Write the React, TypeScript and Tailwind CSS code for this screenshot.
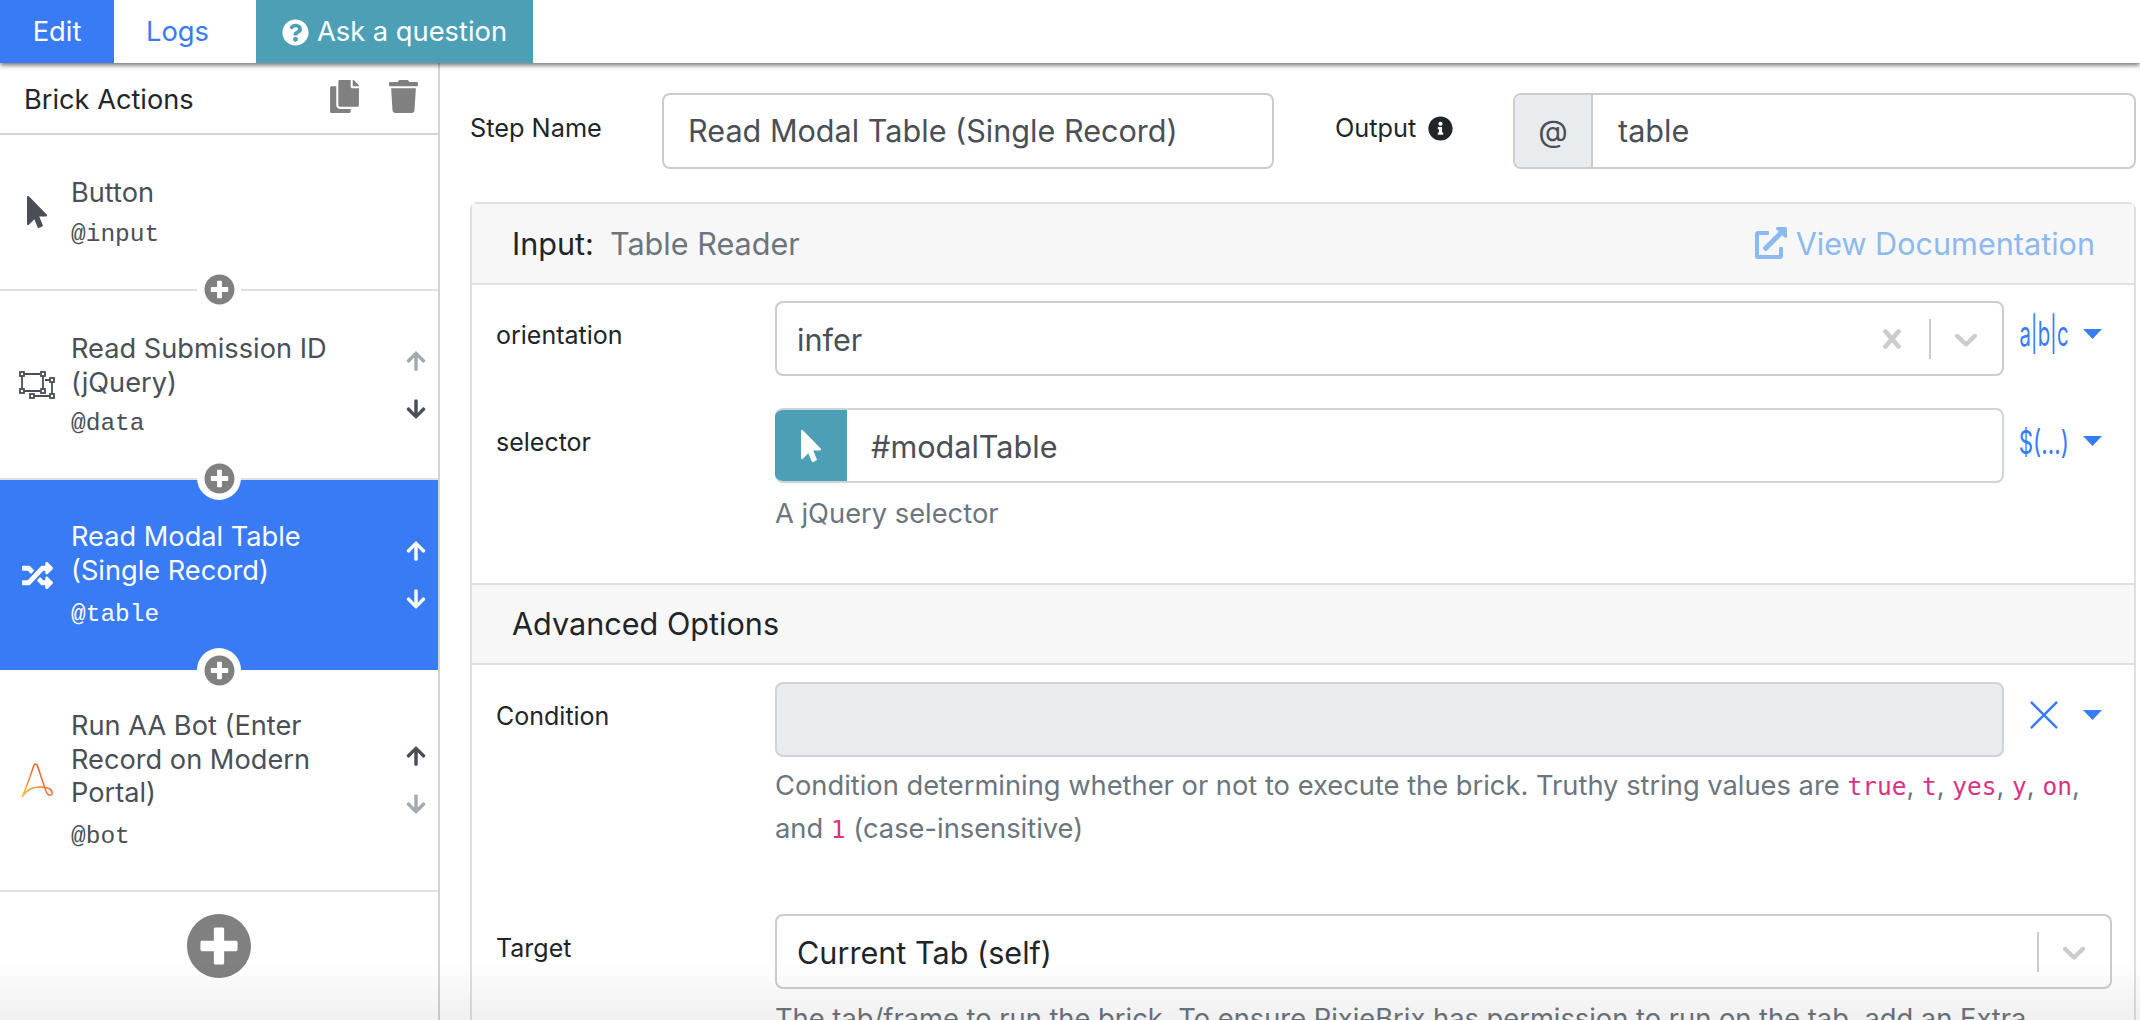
import { FaArrowDown, FaArrowUp, FaCopy, FaExternalLinkAlt, FaInfoCircle, FaMousePointer, FaPlusCircle, FaQuestionCircle, FaRandom, FaTrash } from "react-icons/fa";
import type { ReactNode } from "react";

function AutomationLogo() {
  return (
    <svg viewBox="0 0 32 35" className="h-[35px] w-[32px]" fill="none">
      <defs>
        <linearGradient id="aa" x1="0" y1="1" x2="1" y2="0">
          <stop offset="0" stopColor="#f9c23c" />
          <stop offset="0.55" stopColor="#e8743a" />
          <stop offset="1" stopColor="#dd5128" />
        </linearGradient>
      </defs>
      <path
        d="M1 34 C5 26 10 11 13 2 C13.6 0.6 15.6 0.6 16.2 2 L24.5 27 C26 32 30 34 31 30.5 C32 26 26 24 19 24 C11 24 5 27 1 34"
        stroke="url(#aa)"
        strokeWidth="1.6"
      />
    </svg>
  );
}

function UngroupIcon() {
  return (
    <svg viewBox="0 0 36 28" className="h-[28px] w-[36px]" fill="none" stroke="#4a4f57" strokeWidth="1.8">
      <path d="M5 3 H21 M3 5 V18 M5 20 H21 M24 5 V18 M15 25 H31 M33 11 V23 M26 9 H31" />
      <rect x="1" y="1" width="4" height="4" />
      <rect x="22" y="1" width="4" height="4" />
      <rect x="1" y="18" width="4" height="4" />
      <rect x="22" y="18" width="4" height="4" />
      <rect x="31" y="7" width="4" height="4" />
      <rect x="11" y="23" width="4" height="4" />
      <rect x="31" y="23" width="4" height="4" />
    </svg>
  );
}

function AddDot() {
  return (
    <div className="absolute bottom-[-22px] left-[197px] z-10 flex h-[44px] w-[44px] items-center justify-center rounded-full bg-white">
      <FaPlusCircle className="text-[31px] text-[#808080]" />
    </div>
  );
}

type BrickProps = {
  icon: ReactNode;
  title: ReactNode;
  alias: string;
  height: string;
  textBox: string;
  aliasGap: string;
  active?: boolean;
  up?: boolean;
  down?: boolean;
  border?: boolean;
  dot?: boolean;
};

function Brick({ icon, title, alias, height, textBox, aliasGap, active, up, down, border, dot }: BrickProps) {
  const onColor = active ? "text-white" : "text-[#4a4f57]";
  return (
    <div className={`relative flex items-center ${height} ${active ? "bg-[#397af5] text-white" : "text-[#4a4f57]"} ${border ? "border-b-[2px] border-[#dfdfdf]" : ""}`}>
      <div className="flex w-[71px] shrink-0 justify-center pl-[3px]">{icon}</div>
      <div className={`min-w-0 flex-1 ${textBox}`}>
        <div className="text-[27.2px] leading-[33.5px]">{title}</div>
        <div className={`${aliasGap} font-['Liberation_Mono',monospace] text-[24.5px] leading-[30px]`}>{alias}</div>
      </div>
      <div className="flex w-[44px] shrink-0 flex-col items-center gap-[26px]">
        {up !== undefined && <FaArrowUp className={`text-[22px] ${up ? onColor : "text-[#a5a8ad]"}`} />}
        {down !== undefined && <FaArrowDown className={`text-[22px] ${down ? onColor : "text-[#a5a8ad]"}`} />}
      </div>
      {dot && <AddDot />}
    </div>
  );
}

function Toggle({ children }: { children: ReactNode }) {
  return (
    <div className="flex h-[66px] w-[108px] shrink-0 items-center pl-[15px] text-[#397af5]">
      <div className="flex w-[50px] justify-center">{children}</div>
      <svg viewBox="0 0 19 10" className="ml-[14px] h-[10px] w-[19px]" fill="#397af5">
        <path d="M0 0 H19 L9.5 10 Z" />
      </svg>
    </div>
  );
}

function Code({ children }: { children: ReactNode }) {
  return <code className="font-['DejaVu_Sans_Mono',monospace] text-[24.5px] text-[#d63384]">{children}</code>;
}

function SelectBox({ value, clear, dark }: { value: string; clear?: boolean; dark?: boolean }) {
  return (
    <div className="flex h-[75px] flex-1 items-center rounded-[8px] border-[2px] border-[#ccc] bg-white pl-[20px]">
      <span className={`flex-1 pt-[2px] text-[30.6px] ${dark ? "text-[#212529]" : "text-[#4a4f57]"}`}>{value}</span>
      {clear && (
        <svg viewBox="0 0 20 20" className="mr-[18px] h-[38px] w-[38px]" fill="#ccc">
          <path d="M14.348 14.849c-0.469 0.469-1.229 0.469-1.697 0l-2.651-3.030-2.651 3.029c-0.469 0.469-1.229 0.469-1.697 0-0.469-0.469-0.469-1.229 0-1.697l2.758-3.15-2.759-3.152c-0.469-0.469-0.469-1.228 0-1.697s1.228-0.469 1.697 0l2.652 3.031 2.651-3.031c0.469-0.469 1.228-0.469 1.697 0s0.469 1.229 0 1.697l-2.758 3.152 2.758 3.15c0.469 0.469 0.469 1.229 0 1.698z" />
        </svg>
      )}
      <div className="h-[40px] w-[2px] bg-[#ccc]" />
      <svg viewBox="0 0 20 20" className="ml-[16px] mr-[17px] h-[38px] w-[38px]" fill="#ccc">
        <path d="M4.516 7.548c0.436-0.446 1.043-0.481 1.576 0l3.908 3.747 3.908-3.747c0.533-0.481 1.141-0.446 1.574 0 0.436 0.445 0.408 1.197 0 1.615-0.406 0.418-4.695 4.502-4.695 4.502-0.217 0.223-0.502 0.335-0.787 0.335s-0.57-0.112-0.789-0.335c0 0-4.287-4.084-4.695-4.502s-0.436-1.17 0-1.615z" />
      </svg>
    </div>
  );
}

export default function App() {
  return (
    <div className="relative flex h-screen w-full flex-col overflow-hidden bg-white font-['Inter',sans-serif] text-[#212529]">
      {/* top tabs */}
      <div className="relative z-20 flex h-[63px] shrink-0 items-stretch bg-white text-[27.3px] shadow-[0_2px_5px_rgba(0,0,0,0.6)]">
        <div className="flex w-[114px] items-center justify-center bg-[#397af5] pt-[2px] text-white">Edit</div>
        <div className="flex w-[142px] items-center pl-[32px] pt-[2px] text-[#397af5]">Logs</div>
        <div className="flex w-[277px] items-center justify-center gap-[8px] bg-[#4c9fb5] pt-[2px] text-white">
          <FaQuestionCircle className="text-[27px]" />
          Ask a question
        </div>
      </div>

      <div className="flex min-h-0 flex-1">
        {/* sidebar */}
        <div className="w-[440px] shrink-0 border-r-[2px] border-[#d3d3d3]">
          <div className="flex h-[72px] items-center justify-between border-b-[2px] border-[#d3d3d3] pl-[24px] pr-[18px]">
            <span className="pt-[4px] text-[27.2px]">Brick Actions</span>
            <div className="flex items-center gap-[26px] pb-[4px] text-[#808080]">
              <FaCopy className="text-[33px]" />
              <FaTrash className="text-[33px]" />
            </div>
          </div>
          <Brick
            height="h-[156px]"
            textBox="pt-[2px]"
            aliasGap="mt-[10px]"
            icon={<FaMousePointer className="text-[32px] text-[#4a4f57]" />}
            title="Button"
            alias="@input"
            border
            dot
          />
          <Brick
            height="h-[189px]"
            textBox="pt-[2px]"
            aliasGap="mt-[10px]"
            icon={<UngroupIcon />}
            title={<>Read Submission ID<br />(jQuery)</>}
            alias="@data"
            up={false}
            down
            border
            dot
          />
          <Brick
            height="h-[190px]"
            textBox="pt-0"
            aliasGap="mt-[13px]"
            active
            icon={<FaRandom className="text-[31px] text-white" />}
            title={<>Read Modal Table<br />(Single Record)</>}
            alias="@table"
            up
            down
            dot
          />
          <Brick
            height="h-[222px]"
            textBox="pt-[1px]"
            aliasGap="mt-[12px]"
            icon={<AutomationLogo />}
            title={<>Run AA Bot (Enter<br />Record on Modern<br />Portal)</>}
            alias="@bot"
            up
            down={false}
            border
          />
          <div className="flex justify-center pt-[21px]">
            <FaPlusCircle className="text-[66px] text-[#808080]" />
          </div>
        </div>

        {/* main */}
        <div className="min-w-0 flex-1 pl-[30px] pr-[4px] pt-[30px]">
          <div className="flex h-[76px] items-center">
            <span className="w-[192px] shrink-0 pb-[6px] text-[25.3px]">Step Name</span>
            <div className="flex h-full w-[612px] shrink-0 items-center rounded-[8px] border-[2px] border-[#ccc] pl-[24px] text-[30.6px] text-[#4a4f57]">
              Read Modal Table (Single Record)
            </div>
            <div className="flex w-[239px] shrink-0 items-center gap-[12px] pb-[6px] pl-[61px] text-[25.3px]">
              Output <FaInfoCircle className="text-[25px]" />
            </div>
            <div className="flex h-full flex-1 items-stretch overflow-hidden rounded-[8px] border-[2px] border-[#ccc] text-[30.6px] text-[#4a4f57]">
              <div className="flex w-[78px] items-center justify-center border-r-[2px] border-[#ccc] bg-[#e9ecef]">@</div>
              <div className="flex flex-1 items-center pl-[25px]">table</div>
            </div>
          </div>

          <div className="mt-[33px] rounded-t-[8px] border-x-[2px] border-t-[2px] border-[#dfdfdf]">
            <div className="flex h-[81px] items-center justify-between border-b-[2px] border-[#dfdfdf] bg-[#f7f7f7] pl-[40px] pr-[39px] text-[30.6px]">
              <div>
                Input:<span className="ml-[16px] text-[#6c757d]">Table Reader</span>
              </div>
              <div className="flex items-center gap-[9px] text-[#8cb9ee]">
                <FaExternalLinkAlt className="text-[32px]" />
                View Documentation
              </div>
            </div>

            <div className="pl-[24px] pr-[22px]">
              <div className="flex pt-[16px]">
                <span className="w-[279px] shrink-0 pt-[16px] text-[25px]">orientation</span>
                <SelectBox value="infer" clear />
                <Toggle>
                  <span className="inline-block scale-x-[0.6] text-[34px] leading-none">a|b|c</span>
                </Toggle>
              </div>

              <div className="flex pt-[32px]">
                <span className="w-[279px] shrink-0 pt-[16px] text-[25px]">selector</span>
                <div className="flex h-[75px] flex-1 items-stretch overflow-hidden rounded-[8px] border-y-[2px] border-r-[2px] border-[#ced4da]">
                  <div className="my-[-2px] flex w-[72px] items-center justify-center bg-[#4c9fb5]">
                    <FaMousePointer className="text-[32px] text-white" />
                  </div>
                  <div className="flex flex-1 items-center pl-[24px] pt-[2px] text-[30.6px] text-[#4a4f57]">#modalTable</div>
                </div>
                <Toggle>
                  <span className="inline-block scale-x-[0.7] pt-[3px] text-[32px] leading-none">$(...)</span>
                </Toggle>
              </div>
              <p className="ml-[279px] mt-[13px] h-[87px] text-[27.3px] leading-[36px] text-[#6c757d]">A jQuery selector</p>
            </div>

            <div className="flex h-[82px] items-center border-y-[2px] border-[#dfdfdf] bg-[#f7f7f7] pl-[40px] text-[30.6px]">Advanced Options</div>

            <div className="pl-[24px] pr-[22px]">
              <div className="flex pt-[17px]">
                <span className="w-[279px] shrink-0 pt-[16px] text-[25px]">Condition</span>
                <div className="h-[75px] flex-1 rounded-[8px] border-[2px] border-[#ced4da] bg-[#e9ebef]" />
                <Toggle>
                  <svg viewBox="0 0 30 30" className="h-[28px] w-[28px]" stroke="#397af5" strokeWidth="2.6" fill="none">
                    <path d="M1 1 L29 29 M29 1 L1 29" />
                  </svg>
                </Toggle>
              </div>
              <p className="ml-[279px] mt-[8px] h-[149px] whitespace-nowrap text-[27.3px] leading-[42px] text-[#6c757d]">
                Condition determining whether or not to execute the brick. Truthy string values are <Code>true</Code>, <Code>t</Code>, <Code>yes</Code>, <Code>y</Code>, <Code>on</Code>,<br />
                and <Code>1</Code> (case-insensitive)
              </p>

              <div className="flex">
                <span className="w-[279px] shrink-0 pt-[16px] text-[25px]">Target</span>
                <SelectBox value="Current Tab (self)" dark />
              </div>
              <p className="ml-[279px] mt-[12px] whitespace-nowrap text-[27.3px] leading-[36px] text-[#6c757d]">
                The tab/frame to run the brick. To ensure PixieBrix has permission to run on the tab, add an Extra
              </p>
            </div>
          </div>
        </div>
      </div>

      {/* bottom fade */}
      <div className="pointer-events-none absolute inset-x-0 bottom-0 z-10 h-[60px] bg-gradient-to-b from-transparent to-[rgba(0,0,0,0.06)]" />
    </div>
  );
}
